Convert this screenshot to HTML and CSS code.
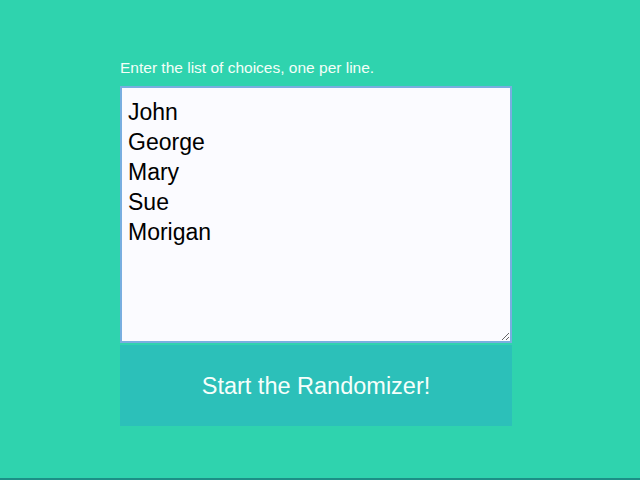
FILE: index.html
```html
<!DOCTYPE html>
<html>
<head>
<meta charset="utf-8">
<link rel="stylesheet" href="styles.css">
</head>
<body>
<main class="wrap">
  <label class="label" for="choices">Enter the list of choices, one per line.</label>
  <textarea id="choices" class="choices">John
George
Mary
Sue
Morigan</textarea>
  <button class="start">Start the Randomizer!</button>
</main>
<div class="bottom"></div>
</body>
</html>
```
FILE: styles.css
```css
html, body {
  margin: 0;
  padding: 0;
  height: 100%;
}
body {
  background: #2fd3ae;
  font-family: "Liberation Sans", Arial, sans-serif;
  display: flex;
  flex-direction: column;
}
.wrap {
  flex: 1;
  width: 392px;
  margin: 0 0 0 120px;
  padding-top: 58px;
  display: flex;
  flex-direction: column;
  box-sizing: border-box;
}
.label {
  color: #f4fff8;
  font-size: 15.5px;
  line-height: 19px;
  margin-bottom: 9px;
}
.choices {
  height: 257px;
  box-sizing: border-box;
  border: 2px solid #78aee0;
  background: #fbfbff;
  font-family: "Liberation Sans", Arial, sans-serif;
  font-size: 23px;
  line-height: 30px;
  color: #000;
  padding: 9px 6px;
  margin: 0;
  resize: vertical;
  outline: none;
}
.start {
  margin-top: 2px;
  height: 81px;
  border: 0;
  border-radius: 0;
  background: #2cc0b9;
  color: #f6fffb;
  font-family: "Liberation Sans", Arial, sans-serif;
  font-size: 23.5px;
  padding: 2px 0 0;
}
.bottom {
  height: 2px;
  background: #1c8f86;
}
```
